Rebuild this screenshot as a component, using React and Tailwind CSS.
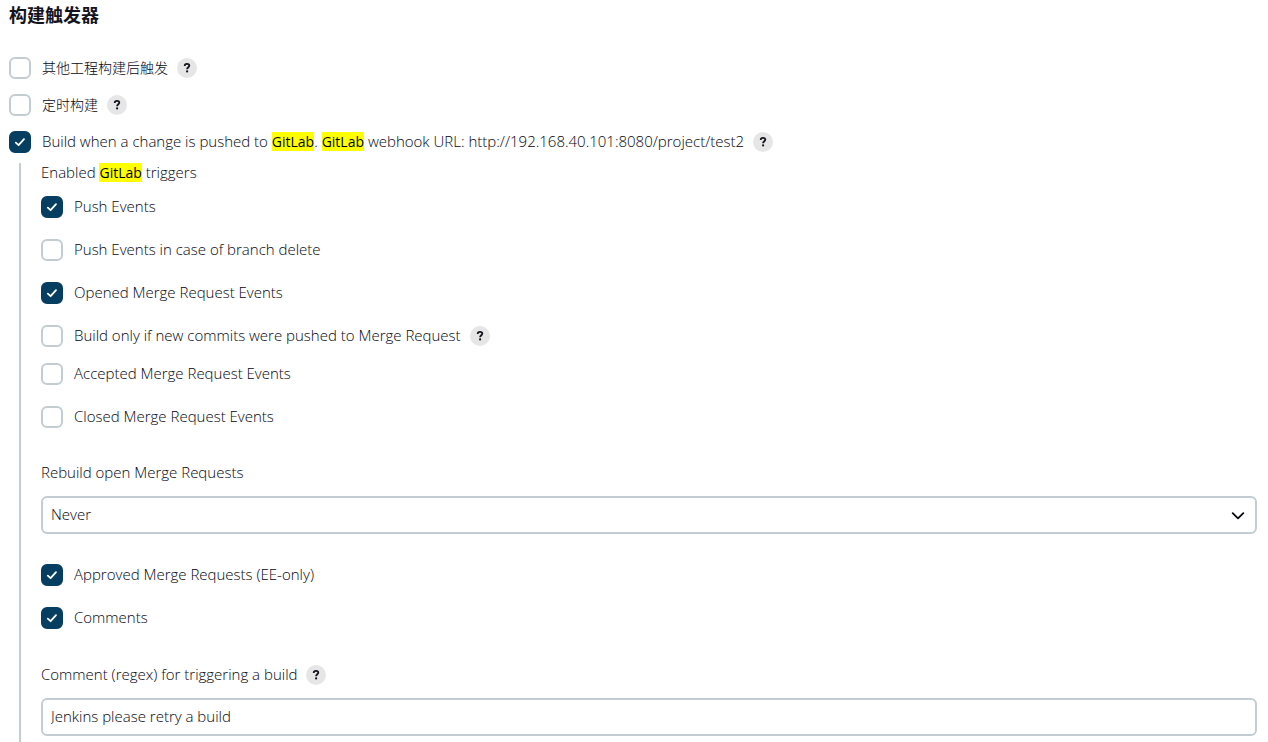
import { useId } from 'react'

function HelpButton({ label }) {
  return (
    <button
      type="button"
      aria-label={`Help for feature: ${label}`}
      className="inline-flex h-5 w-5 shrink-0 items-center justify-center rounded-full bg-[#e6e6e6] text-[#14141f]"
    >
      <svg viewBox="0 0 20 20" className="h-5 w-5" fill="none" stroke="currentColor" strokeWidth="1.8" aria-hidden="true">
        <path d="M7.7 7.9C7.7 6.5 8.7 5.8 10 5.8s2.3.7 2.3 1.9c0 1.5-2.2 1.7-2.2 3.6" />
        <circle cx="10.1" cy="13.4" r="1.1" fill="currentColor" stroke="none" />
      </svg>
    </button>
  )
}

function Mark({ children }) {
  return <mark className="bg-[#ffff00] text-sm leading-4 font-normal text-black">{children}</mark>
}

function CheckboxRow({ children, checked = false, help, labelClass = 'pb-0.5' }) {
  const id = useId()

  return (
    <div className="flex items-center gap-[9px]">
      <div className="flex items-center">
        <span className="relative flex h-[22px] w-[22px] shrink-0">
          <input
            id={id}
            type="checkbox"
            defaultChecked={checked}
            className="peer h-full w-full appearance-none rounded-md border-2 border-[#c3ccd1] bg-white checked:border-[#063e62] checked:bg-[#063e62]"
          />
          <svg
            viewBox="0 0 22 22"
            className="pointer-events-none absolute inset-0 hidden text-white peer-checked:block"
            fill="none"
            stroke="currentColor"
            strokeWidth="1.8"
            strokeLinecap="round"
            strokeLinejoin="round"
            aria-hidden="true"
          >
            <path d="M6.8 11.6l2.8 2.6 5.4-6" />
          </svg>
        </span>
        <label htmlFor={id} className={`pl-[11px] ${labelClass}`}>
          {children}
        </label>
      </div>
      {help && <HelpButton label={help} />}
    </div>
  )
}

export default function App() {
  return (
    <main className="min-h-screen bg-white pl-[9px] pr-[11px] font-['Open_Sans','Noto_Sans_CJK_SC',sans-serif] text-[15px] font-light leading-5 text-[#05050f]">
      <h2 className="pt-1 text-lg font-bold leading-[22px] text-[#14141f]">构建触发器</h2>

      <div className="mt-[31px] space-y-[15px]">
        <CheckboxRow help="其他工程构建后触发" labelClass="text-sm leading-[22px]">
          其他工程构建后触发
        </CheckboxRow>
        <CheckboxRow help="定时构建" labelClass="text-sm leading-[22px]">
          定时构建
        </CheckboxRow>
        <CheckboxRow checked help="Build when a change is pushed to GitLab">
          Build when a change is pushed to <Mark>GitLab</Mark>. <Mark>GitLab</Mark> webhook URL:
          {' '}http://192.168.40.101:8080/project/test2
        </CheckboxRow>
      </div>

      <section className="ml-[10px] mt-[10px] border-l-2 border-[#c3ccd1] pb-[6px] pl-5">
        <fieldset>
          <legend className="leading-[18px]">
            Enabled <Mark>GitLab</Mark> triggers
          </legend>
          <div className="mt-[15px] space-y-[21px]">
            <CheckboxRow checked>Push Events</CheckboxRow>
            <CheckboxRow>Push Events in case of branch delete</CheckboxRow>
            <CheckboxRow checked>Opened Merge Request Events</CheckboxRow>
            <CheckboxRow help="Build only if new commits were pushed to Merge Request">
              Build only if new commits were pushed to Merge Request
            </CheckboxRow>
          </div>
          <div className="mt-4 space-y-[21px]">
            <CheckboxRow>Accepted Merge Request Events</CheckboxRow>
            <CheckboxRow>Closed Merge Request Events</CheckboxRow>
          </div>
        </fieldset>

        <div className="mt-[34px]">
          <label htmlFor="rebuild" className="block pb-0.5">
            Rebuild open Merge Requests
          </label>
          <div className="relative mt-3">
            <select
              id="rebuild"
              defaultValue="never"
              className="block h-[38px] w-full appearance-none rounded-md border-2 border-[#c3ccd1] bg-white px-2 pb-0.5"
            >
              <option value="never">Never</option>
              <option value="source">On push to source branch</option>
              <option value="both">On push to source or target branch</option>
            </select>
            <svg
              viewBox="0 0 14 8"
              className="pointer-events-none absolute right-3 top-4 h-2 w-[14px]"
              fill="none"
              stroke="currentColor"
              strokeWidth="1.8"
              strokeLinecap="round"
              strokeLinejoin="round"
              aria-hidden="true"
            >
              <path d="M1.7 1.2L7 6.4l5.3-5.2" />
            </svg>
          </div>
        </div>

        <div className="mt-[30px] space-y-[21px]">
          <CheckboxRow checked>Approved Merge Requests (EE-only)</CheckboxRow>
          <CheckboxRow checked>Comments</CheckboxRow>
        </div>

        <div className="mt-[35px]">
          <div className="flex items-center gap-[9px]">
            <label htmlFor="comment-regex" className="pb-0.5">
              Comment (regex) for triggering a build
            </label>
            <HelpButton label="Comment (regex) for triggering a build" />
          </div>
          <input
            id="comment-regex"
            type="text"
            defaultValue="Jenkins please retry a build"
            className="mt-3 block h-[38px] w-full rounded-md border-2 border-[#c3ccd1] bg-white px-2 pb-0.5"
          />
        </div>
      </section>
    </main>
  )
}
